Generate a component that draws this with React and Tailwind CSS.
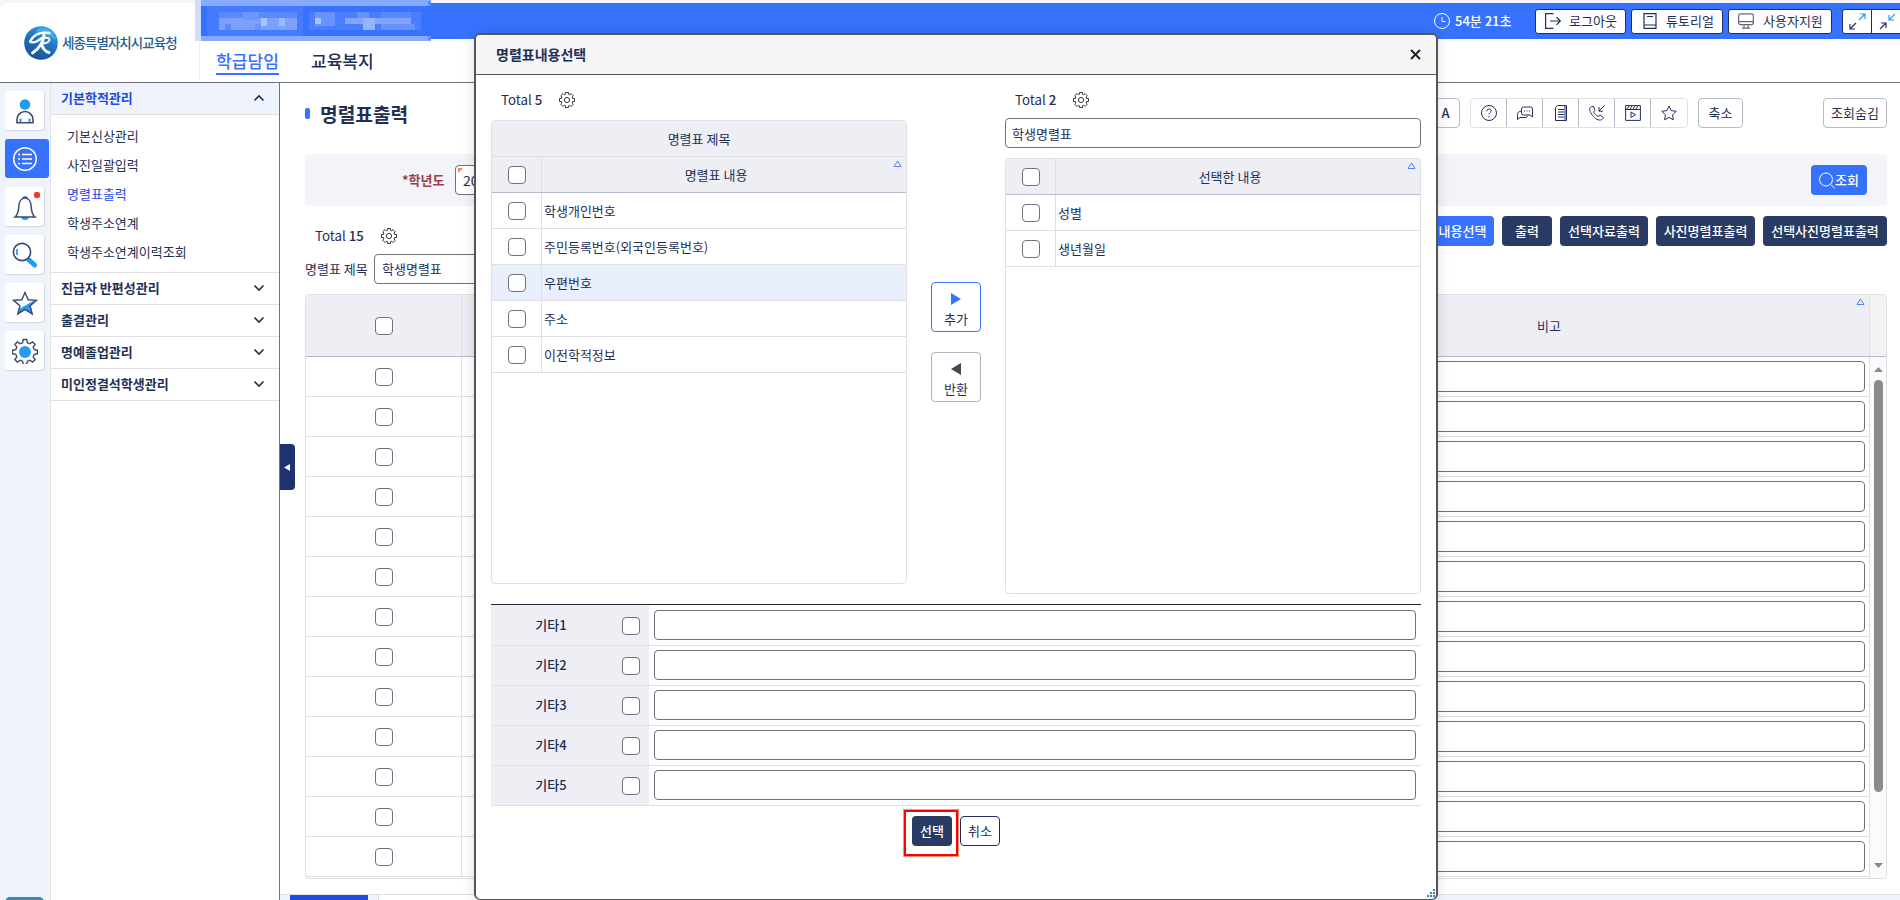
import React, { useState } from "react";
import clsx from "clsx";

const subMenus = [
  "기본신상관리",
  "사진일괄입력",
  "명렬표출력",
  "학생주소연계",
  "학생주소연계이력조회",
];

const menus = [
  "진급자 반편성관리",
  "출결관리",
  "명예졸업관리",
  "미인정결석학생관리",
];

const leftRows = [
  "학생개인번호",
  "주민등록번호(외국인등록번호)",
  "우편번호",
  "주소",
  "이전학적정보",
];

const rightRows = ["성별", "생년월일"];

const etcRows = ["기타1", "기타2", "기타3", "기타4", "기타5"];

function Checkbox() {
  return (
    <span className="block w-[18px] h-[18px] shrink-0 rounded-[4px] border border-[#6f7080] bg-white" />
  );
}

function Gear() {
  return (
    <svg width="16" height="16" viewBox="0 0 16 16" fill="none" stroke="#333" strokeWidth="1">
      <path d="M6.500 .5h3v1.700l1.300.5 1.200-1.200 2.300 2.300-1.200 1.200.5 1.500h1.900v3h-1.900l-.5 1.500 1.200 1.200-2.300 2.300-1.200-1.200-1.300.5v1.700h-3v-1.700l-1.300-.5L4 14.500l-2.300-2.300 1.200-1.200-.5-1.500H.5v-3h1.900l.5-1.500-1.200-1.200L4 1.500l1.200 1.200 1.300-.5z" />
      <circle cx="8" cy="8" r="2.600" />
    </svg>
  );
}

function Chevron({ up }) {
  return (
    <svg width="12" height="8" viewBox="0 0 12 8" fill="none" stroke="#1f3050" strokeWidth="1.6">
      <path d={up ? "M1.500 6.500 6 2l4.500 4.500" : "M1.500 1.500 6 6l4.500-4.500"} />
    </svg>
  );
}

function SortMark() {
  return (
    <svg
      className="absolute right-[4px] top-[3px]"
      width="9"
      height="8"
      viewBox="0 0 9 8"
      fill="none"
      stroke="#5585ff"
      strokeWidth="1"
    >
      <path d="M4.500 1 8 6.500H1z" />
    </svg>
  );
}

function Total({ count }) {
  return (
    <span className="whitespace-pre text-[13.3px] leading-[20px]">
      Total <b className="font-medium">{count}</b>
    </span>
  );
}

function Logo() {
  return (
    <svg width="34" height="34" viewBox="0 0 34 34">
      <defs>
        <linearGradient id="logo" x1="0.8" y1="0" x2="0.3" y2="1">
          <stop offset="0" stopColor="#35a8ea" />
          <stop offset="0.5" stopColor="#1f72bd" />
          <stop offset="1" stopColor="#174f9c" />
        </linearGradient>
      </defs>
      <circle cx="17" cy="17" r="16.800" fill="url(#logo)" />
      <path d="M13 3a14 14 0 0 1 19 11l-5-3-14-4z" fill="#62bff2" opacity=".5" />
      <g fill="none" stroke="#fff" strokeLinecap="round" strokeLinejoin="round">
        <path d="M25.500 7C18 6 10 8 6 15.500c3 2.500 8-.5 12-3.500" strokeWidth="2.300" />
        <path d="M20 7c.5 7-4 15-11.500 20" strokeWidth="2.800" />
        <path d="M16 13c5-2 10-1.500 9.500 1-.5 2-4 3.500-7.500 3.500" strokeWidth="2" />
        <path d="M17.500 18c1 4 4 7.500 7.500 8.500" strokeWidth="3" />
      </g>
    </svg>
  );
}

// 개인정보 영역 모자이크
function Mosaic() {
  return (
    <svg className="absolute left-[195px] top-0" width="237" height="42" shapeRendering="crispEdges">
      <rect x="4" y="6" width="233" height="33" fill="#3772ff" />
      <rect x="0" y="0" width="6" height="41" fill="#d3ddfb" />
      <rect x="6" y="0" width="230" height="6" fill="#87a9ff" />
      <rect x="6" y="36" width="230" height="5" fill="#87a9ff" />
      <rect x="233" y="1" width="3" height="5" fill="#5c8bff" />
      <rect x="233" y="36" width="3" height="4" fill="#5c8bff" />
      <rect x="12" y="6" width="96" height="30" fill="#457bff" />
      <rect x="24" y="12" width="78" height="18" fill="#5a89ff" />
      <rect x="24" y="18" width="78" height="12" fill="#7ba0ff" />
      <rect x="30" y="24" width="6" height="6" fill="#5a89ff" />
      <rect x="48" y="12" width="16" height="8" fill="#6c97ff" />
      <rect x="66" y="18" width="6" height="8" fill="#a5c5ff" />
      <rect x="84" y="18" width="6" height="8" fill="#9dbcff" />
      <rect x="60" y="24" width="6" height="6" fill="#6892ff" />
      <rect x="114" y="12" width="112" height="18" fill="#4a7eff" />
      <rect x="120" y="12" width="20" height="14" fill="#6892ff" />
      <rect x="120" y="18" width="6" height="6" fill="#a5c5ff" />
      <rect x="150" y="18" width="66" height="6" fill="#82a6ff" />
      <rect x="162" y="12" width="12" height="6" fill="#6892ff" />
      <rect x="168" y="18" width="12" height="12" fill="#96b5ff" />
      <rect x="186" y="12" width="30" height="6" fill="#5a89ff" />
      <rect x="186" y="24" width="34" height="6" fill="#6892ff" />
    </svg>
  );
}

function Header() {
  return (
    <header className="flex h-[83px] border-b border-[#6f7078] bg-[#f5f5f5] pt-[3px]">
      <div className="flex w-[200px] shrink-0 items-center gap-1 rounded-tl-lg border-r border-[#eef0f4] bg-white pl-6">
        <Logo />
        <span className="mb-[2px] whitespace-nowrap text-[13.5px] font-medium leading-[20px] tracking-[-0.95px] text-[#255c92]">
          세종특별자치시교육청
        </span>
      </div>
      <div className="flex flex-1 flex-col bg-white">
        <div className="flex h-[36px] items-center gap-[5px] bg-[#3772ff] text-[13px]">
          <div className="ml-[1234px] flex w-[96px] shrink-0 items-center gap-[5px] font-medium text-white">
            <svg width="16" height="16" viewBox="0 0 16 16" fill="none" stroke="#fff">
              <circle cx="8" cy="8" r="7.500" />
              <path d="M8 4v4.500h3.500" />
            </svg>
            <span>54분 21초</span>
          </div>
          <button className="flex h-[25px] w-[91px] shrink-0 items-center gap-[8px] rounded-[3px] border border-[#1f3060] bg-white pl-[9px]">
            <svg width="16" height="16" viewBox="0 0 16 16" fill="none" stroke="#1f3060" strokeWidth="1.200">
              <path d="M8.500 .6H.6v14.800h7.900M5 8h10M11.500 4.200 15.300 8l-3.800 3.800" />
            </svg>
            로그아웃
          </button>
          <button className="flex h-[25px] w-[92px] shrink-0 items-center gap-[9px] rounded-[3px] border border-[#1f3060] bg-white pl-[11px]">
            <svg width="14" height="16" viewBox="0 0 14 16" fill="none" stroke="#1f3060" strokeWidth="1.200">
              <path d="M1 .6h12v14.800H1zM1 12h12M4 3.500h6" />
            </svg>
            튜토리얼
          </button>
          <button className="flex h-[25px] w-[104px] shrink-0 items-center gap-[9px] rounded-[3px] border border-[#1f3060] bg-white pl-[9px]">
            <svg width="16" height="16" viewBox="0 0 16 16" fill="none" stroke="#66677a" strokeWidth="1.200">
              <rect x=".6" y=".8" width="14.800" height="10.800" rx="2" />
              <path d="M.6 8.600h14.800M6 11.600V15M10 11.600V15M4 15.200h8" />
            </svg>
            사용자지원
          </button>
          <div className="ml-[5px] flex h-[25px] w-[62px] shrink-0 items-center rounded-[3px] border border-[#1f3060] bg-white">
            <span className="flex h-full w-[29px] items-center justify-center border-r border-[#1f3060]">
              <svg width="17" height="17" viewBox="0 0 17 17" fill="none" strokeWidth="1.200">
                <path d="M10 7l6-6M11 1h5v5" stroke="#269cf0" />
                <path d="M7 10l-6 6M1 11v5h5" stroke="#1f3060" />
              </svg>
            </span>
            <span className="flex h-full w-[30px] items-center justify-center">
              <svg width="17" height="17" viewBox="0 0 17 17" fill="none" strokeWidth="1.200">
                <path d="M16 1l-6 6M10 2v5h5" stroke="#269cf0" />
                <path d="M1 16l6-6M2 10h5v5" stroke="#1f3060" />
              </svg>
            </span>
          </div>
        </div>
        <nav className="flex gap-8 pl-4 pt-[10px] text-[17.1px] font-medium leading-[24px]">
          <span className="border-b-2 border-[#3772ff] text-[#3772ff]">학급담임</span>
          <span>교육복지</span>
        </nav>
      </div>
    </header>
  );
}

const railIcons = [
  <svg key="user" width="26" height="26" viewBox="0 0 26 26" fill="none">
    <circle cx="13" cy="6.500" r="5.300" fill="#229cf0" />
    <path d="M5 24.700v-3.200a8 8 0 0 1 16 0v3.200z" stroke="#3c4a70" strokeWidth="1.600" />
    <path d="M8.500 20.500v3.400M17.500 20.500v3.400" stroke="#229cf0" strokeWidth="2" />
  </svg>,
  <svg key="list" width="26" height="26" viewBox="0 0 26 26" fill="none" stroke="#fff" strokeWidth="1.500">
    <circle cx="13" cy="13" r="11.300" />
    <path d="M10 8.500h10M10 13h10M10 17.500h10M6 8.500h2M6 13h2M6 17.500h2" />
  </svg>,
  <svg key="bell" width="26" height="26" viewBox="0 0 26 26" fill="none">
    <path d="M10 5a3 3 0 0 1 6 0M9 23h8c0 4-8 4-8 0" fill="#229cf0" />
    <path d="M3 23c4-3 3.500-9 4-12 .5-4 3-7 6-7s5.500 3 6 7c.5 3 0 9 4 12z" fill="#fff" stroke="#3c4a70" strokeWidth="1.500" />
  </svg>,
  <svg key="search" width="26" height="26" viewBox="0 0 26 26" fill="none">
    <path d="m17 18 5.500 5" stroke="#229cf0" strokeWidth="5" strokeLinecap="round" />
    <circle cx="10" cy="10" r="8.600" fill="#fff" stroke="#3c4a70" strokeWidth="1.600" />
    <path d="M5.500 13a6 6 0 0 1 0-6" stroke="#229cf0" strokeWidth="1.600" />
  </svg>,
  <svg key="star" width="26" height="26" viewBox="0 0 26 26" fill="none">
    <path d="M23 10 7 19l-1.500 5 7.500-4 7.500 4-2-8z" fill="#229cf0" />
    <path d="m13 2.500 3.200 7.300 8.200.6-6.300 5.300 2.100 8.200-7.200-4.500-7.200 4.500 2.100-8.200L1.600 10.400l8.200-.6z" stroke="#3c4a70" strokeWidth="1.400" />
  </svg>,
  <svg key="gear" width="26" height="26" viewBox="0 0 26 26" fill="none" stroke="#3c4a70" strokeWidth="1.400">
    <path d="M11.200 1.500h3.600l.6 3.300 2.400 1 2.800-1.900 2.500 2.500-1.900 2.800 1 2.400 3.300.6v3.600l-3.300.6-1 2.400 1.900 2.800-2.500 2.500-2.800-1.900-2.400 1-.6 3.300h-3.600l-.6-3.300-2.400-1-2.800 1.900-2.500-2.500 1.900-2.800-1-2.400-3.300-.6v-3.600l3.300-.6 1-2.400-1.900-2.800 2.500-2.500 2.800 1.900 2.400-1z" />
    <circle cx="13" cy="14" r="6" fill="#229cf0" stroke="none" />
  </svg>,
];

function Rail() {
  return (
    <div className="flex w-[51px] shrink-0 flex-col gap-[9px] border-r border-[#e2e2e6] bg-[#eef3fc] pl-[5px] pt-[8px]">
      {railIcons.map((icon, index) => (
        <div
          key={index}
          className={clsx(
            "relative flex h-[39px] shrink-0 items-center rounded-[3px] pl-[7px]",
            index === 1
              ? "w-[44px] bg-[#3772ff]"
              : "w-[39px] bg-white shadow-[1px_1px_1px_#d4d6dc]"
          )}
        >
          {icon}
          {index === 2 && (
            <span className="absolute left-[29px] top-[5px] h-[6px] w-[6px] rounded-[2px] bg-[#f5352b]" />
          )}
        </div>
      ))}
      <div className="mt-[518px] h-[10px] w-[39px] shrink-0 rounded-t-[5px] bg-[#3589b8]" />
    </div>
  );
}

function Sidebar() {
  return (
    <aside className="w-[229px] shrink-0 border-r border-[#6f7078] bg-white text-[13px]">
      <div className="flex h-[32px] items-center justify-between border-b border-[#e0e0e3] bg-[#eef3fc] pb-px pl-[10px] pr-[14px] font-bold text-[#1f4be0]">
        <span>기본학적관리</span>
        <Chevron up />
      </div>
      <ul className="h-[158px] border-b border-[#e0e0e3] pl-[16px] pt-[6px]">
        {subMenus.map((menu) => (
          <li
            key={menu}
            className={clsx("h-[29px] leading-[29px]", menu === "명렬표출력" && "text-[#1f4be0]")}
          >
            {menu}
          </li>
        ))}
      </ul>
      {menus.map((menu) => (
        <div
          key={menu}
          className="flex h-[32px] items-center justify-between border-b border-[#e0e0e3] pb-px pl-[10px] pr-[14px] font-bold"
        >
          <span>{menu}</span>
          <Chevron />
        </div>
      ))}
    </aside>
  );
}

const toolIcons = [
  <>
    <circle cx="8" cy="8" r="7.500" />
    <path d="M5.800 6.200c0-3 4.400-2.800 4.400-.2 0 1.600-2.200 1.600-2.200 3.500M8 11v1.300" />
  </>,
  <>
    <path d="M6.500 2h7a2 2 0 0 1 2 2v8l-2.500-2H6.500a2 2 0 0 1-2-2V4a2 2 0 0 1 2-2zM4.500 6c-2.500 0-4 1.500-4 3.500v5l2.500-2h5c1.500 0 2.500-1 3-2" />
    <path d="M7 6h1M9.500 6h1M12 6h1" />
  </>,
  <path d="M4.500.5h9v15h-11v-13zM5 4.500h6M5 7h6M5 9.500h6M5 12h6M12 .5v15" />,
  <>
    <path d="M2.500 1.500C0 3 0 5 2.500 9s6 6.500 9 6c1.500-.3 2.500-1.500 3-2.500L11 10l-2 1.500C7 10.500 5.500 9 4.500 7L6 5.500 4.500 1.500z" />
    <path d="M15.500.5 10 6M10 2v4.200h4" />
  </>,
  <>
    <path d="M.6.600h14.800v14.800H.6zM.6 4.500h14.800M6 7v5.500L10.500 9.800z" />
    <path d="m2 4 2-3M5 4l2-3M8 4l2-3M11 4l2-3" />
  </>,
  <path d="m8 1 2.200 4.600 5 .7-3.700 3.500.9 5L8 12.400l-4.400 2.400.9-5L.8 6.300l5-.7z" />,
];

function TitleBar() {
  return (
    <div className="flex h-[30px] items-center">
      <span className="h-[11px] w-[5px] rounded-[2px] bg-[#3772ff]" />
      <h1 className="ml-[10px] pt-[2px] text-[19.2px] font-bold leading-[28px]">명렬표출력</h1>
      <div className="ml-auto flex text-[13px]">
        <button className="h-[30px] w-[37px] rounded-[4px] border border-[#b9bac8] pr-[2px] font-medium">
          <span className="ml-[10px]">A</span>
        </button>
        <div className="ml-[10px] flex h-[30px] rounded-[4px] border border-[#dfe0e6]">
          {toolIcons.map((icon, index) => (
            <span
              key={index}
              className="flex w-[36px] items-center justify-center border-r border-[#b9bac8] last:border-r-0"
            >
              <svg width="16" height="16" viewBox="0 0 16 16" fill="none" stroke="#1f3060">
                {icon}
              </svg>
            </span>
          ))}
        </div>
        <button className="ml-[10px] h-[30px] w-[45px] rounded-[4px] border border-[#b9bac8]">
          축소
        </button>
        <button className="ml-[80px] h-[30px] w-[64px] rounded-[4px] border border-[#b9bac8]">
          조회숨김
        </button>
      </div>
    </div>
  );
}

function MainGrid() {
  return (
    <div className="mt-[10px] flex h-[585px] w-[1582px] flex-col overflow-hidden rounded-[4px] border border-[#e0e0e3]">
      <div className="flex h-[62px] shrink-0 border-b border-[#b4b9cc] bg-[#eeeff5]">
        <div className="flex w-[156px] items-center justify-center border-r border-[#e0e0e3] pt-px">
          <Checkbox />
        </div>
        <div className="w-[783px] border-r border-[#e0e0e3]" />
        <div className="relative flex flex-1 items-center justify-center border-r border-[#e0e0e3] pr-[16px] text-[13px]">
          비고
          <SortMark />
        </div>
        <div className="w-[16px] bg-[#f3f3f3]" />
      </div>
      <div className="flex min-h-0 flex-1">
        <div className="flex-1 overflow-hidden">
          {Array.from({ length: 14 }, (_, index) => (
            <div key={index} className="flex h-[40px] border-b border-[#e0e0e3]">
              <div className="flex w-[156px] items-center justify-center border-r border-[#e0e0e3]">
                <Checkbox />
              </div>
              <div className="w-[783px] border-r border-[#e0e0e3]" />
              <div className="flex-1 border-r border-[#e0e0e3] p-[4px]">
                <div className="h-[31px] rounded-[4px] border border-[#6f7078] bg-white" />
              </div>
            </div>
          ))}
        </div>
        <div className="flex w-[16px] flex-col items-center bg-[#fbfbfb] pb-[10px] pt-[10px]">
          <svg width="9" height="5" viewBox="0 0 9 5" fill="#8b8b8b">
            <path d="M0 5 4.500 0 9 5z" />
          </svg>
          <div className="mt-[8px] h-[412px] w-[9px] rounded-full bg-[#8b8b8b]" />
          <svg className="mt-auto" width="9" height="5" viewBox="0 0 9 5" fill="#8b8b8b">
            <path d="M0 0 4.500 5 9 0z" />
          </svg>
        </div>
      </div>
    </div>
  );
}

function Main() {
  return (
    <main className="relative flex-1 bg-white">
      <div className="pl-[25px] pr-[13px] pt-[15px]">
        <TitleBar />
        <section className="mt-[26px] flex h-[52px] items-center rounded-[4px] bg-[#f3f4f9] pl-[97px] pr-[20px] text-[13px]">
          <span className="w-[43px] whitespace-nowrap font-bold text-[#9c3f50]">*학년도</span>
          <div className="relative ml-[10px] flex h-[30px] w-[90px] items-center rounded-[4px] border border-[#6f7078] bg-white pl-[7px] text-[14px]">
            <svg className="absolute left-[2px] top-[2px]" width="5" height="5" fill="#f28070">
              <path d="M0 0h5L0 5z" />
            </svg>
            2024
          </div>
          <button className="ml-auto flex h-[30px] w-[56px] items-center rounded-[4px] bg-[#3772ff] pl-[8px] font-medium text-white">
            <svg width="16" height="17" viewBox="0 0 16 17" fill="none" stroke="#fff">
              <circle cx="7" cy="7.500" r="6.500" />
              <path d="m11.800 12.500 4 4" />
            </svg>
            조회
          </button>
        </section>
        <div className="mt-[10px] flex h-[30px] items-start">
          <div className="ml-[10px] mt-[10px] flex h-[20px] items-center gap-[17px]">
            <Total count={15} />
            <Gear />
          </div>
          <div className="ml-auto flex h-[30px] gap-[8px] text-[13px] font-medium text-white">
            <button className="w-[99px] rounded-[4px] bg-[#3772ff]">명렬표내용선택</button>
            <button className="w-[50px] rounded-[4px] bg-[#2a3b63]">출력</button>
            <button className="w-[88px] rounded-[4px] bg-[#2a3b63]">선택자료출력</button>
            <button className="w-[99px] rounded-[4px] bg-[#2a3b63]">사진명렬표출력</button>
            <button className="w-[124px] rounded-[4px] bg-[#2a3b63]">선택사진명렬표출력</button>
          </div>
        </div>
        <div className="mt-[8px] flex h-[30px] items-center text-[13px]">
          <span className="w-[69px]">명렬표 제목</span>
          <div className="flex h-[30px] w-[300px] items-center rounded-[4px] border border-[#6f7078] pl-[7px]">
            학생명렬표
          </div>
        </div>
        <MainGrid />
      </div>
      {/* 사이드 메뉴 접기 */}
      <div className="absolute left-0 top-[361px] flex h-[46px] w-[15px] items-center rounded-r-[4px] bg-[#203172] pl-[4px]">
        <svg width="6" height="7" fill="#fff">
          <path d="M6 0v7L0 3.500z" />
        </svg>
      </div>
      <div className="mt-[15px] flex h-[10px] border-t border-[#e0e0e3] bg-[#eef3fc] pl-[10px]">
        <div className="w-[78px] bg-[#1f4be0]" />
        <div className="ml-[10px] w-[300px] border-l border-[#d8d9e0] bg-white" />
      </div>
    </main>
  );
}

function Modal() {
  const [title, setTitle] = useState("학생명렬표");

  return (
    <div className="absolute left-[474px] top-[33px] flex h-[867px] w-[964px] flex-col rounded-[6px] border-2 border-b border-[#555] bg-white text-[13px] shadow-[0_0_14px_rgba(0,0,0,0.14)]">
      <div className="flex h-[40px] shrink-0 items-center justify-between rounded-t-[4px] border-b border-[#555] bg-[#f5f5f5] pl-[20px] pr-[15px]">
        <h2 className="text-[14px] font-bold">명렬표내용선택</h2>
        <svg width="11" height="11" viewBox="0 0 11 11" fill="none" stroke="#222" strokeWidth="2">
          <path d="m1 1 9 9M10 1l-9 9" />
        </svg>
      </div>

      <div className="flex h-[529px] shrink-0 px-[15px]">
        <div className="w-[416px] pt-[15px]">
          <div className="ml-[10px] flex h-[20px] items-center gap-[17px]">
            <Total count={5} />
            <Gear />
          </div>
          <div className="mt-[10px] h-[464px] rounded-[4px] border border-[#e0e0e3]">
            <div className="flex h-[36px] items-center justify-center rounded-t-[3px] border-b border-[#e0e0e3] bg-[#eeeff5]">
              명렬표 제목
            </div>
            <div className="flex h-[36px] border-b border-[#b4b9cc] bg-[#eeeff5]">
              <div className="flex w-[50px] items-center justify-center border-r border-[#e0e0e3]">
                <Checkbox />
              </div>
              <div className="relative flex flex-1 items-center justify-center pr-[16px]">
                명렬표 내용
                <SortMark />
              </div>
            </div>
            {leftRows.map((row) => (
              <div
                key={row}
                className={clsx(
                  "flex h-[36px] border-b border-[#e0e0e3]",
                  row === "우편번호" && "bg-[#e9effc]"
                )}
              >
                <div className="flex w-[50px] items-center justify-center border-r border-[#e0e0e3]">
                  <Checkbox />
                </div>
                <div className="flex items-center pl-[2px]">{row}</div>
              </div>
            ))}
          </div>
        </div>

        <div className="flex w-[98px] flex-col items-center gap-[20px] pt-[207px]">
          <button className="flex h-[50px] w-[50px] flex-col items-center rounded-[4px] border border-[#3772ff] pt-[10px] leading-[18px]">
            <svg className="mb-[5px] shrink-0" width="10" height="12" fill="#3772ff">
              <path d="M0 0v12l10-6z" />
            </svg>
            추가
          </button>
          <button className="flex h-[50px] w-[50px] flex-col items-center rounded-[4px] border border-[#b4b5c4] pt-[10px] leading-[18px]">
            <svg className="mb-[5px] shrink-0" width="10" height="12" fill="#444650">
              <path d="M10 0v12L0 6z" />
            </svg>
            반환
          </button>
        </div>

        <div className="w-[416px] pt-[15px]">
          <div className="ml-[10px] flex h-[20px] items-center gap-[17px]">
            <Total count={2} />
            <Gear />
          </div>
          <input
            className="mt-[8px] block h-[30px] w-full rounded-[4px] border border-[#6f7078] px-[6px]"
            value={title}
            onChange={(e) => setTitle(e.target.value)}
          />
          <div className="mt-[10px] h-[436px] rounded-[4px] border border-[#e0e0e3]">
            <div className="flex h-[36px] rounded-t-[3px] border-b border-[#b4b9cc] bg-[#eeeff5]">
              <div className="flex w-[50px] items-center justify-center border-r border-[#e0e0e3]">
                <Checkbox />
              </div>
              <div className="relative flex flex-1 items-center justify-center pr-[16px]">
                선택한 내용
                <SortMark />
              </div>
            </div>
            {rightRows.map((row) => (
              <div key={row} className="flex h-[36px] border-b border-[#e0e0e3]">
                <div className="flex w-[50px] items-center justify-center border-r border-[#e0e0e3]">
                  <Checkbox />
                </div>
                <div className="flex items-center pl-[2px]">{row}</div>
              </div>
            ))}
          </div>
        </div>
      </div>

      <div className="mx-[15px] border-t border-[#222630]">
        {etcRows.map((row, index) => (
          <div
            key={row}
            className={clsx("flex border-b border-[#e0e0e3]", index === 0 ? "h-[41px]" : "h-[40px]")}
          >
            <div className="flex w-[158px] items-end bg-[#eeeff5] pr-[9px] font-medium">
              <span className="w-[120px] pb-px text-center leading-[38px]">{row}</span>
              <span className="mb-[10px] ml-auto">
                <Checkbox />
              </span>
            </div>
            <div className="flex flex-1 items-end px-[5px] pb-[5px]">
              <div className="h-[30px] flex-1 rounded-[4px] border border-[#6f7078]" />
            </div>
          </div>
        ))}
      </div>

      <div className="mt-[4px] flex pl-[428px]">
        <div className="flex h-[46px] w-[54px] border-2 border-[#ff0000] pl-[6px] pt-[4px] shadow-[0_0_0_1px_rgba(255,70,40,0.6)]">
          <button className="h-[30px] w-[40px] shrink-0 rounded-[4px] bg-[#2a3b63] font-medium text-white">
            선택
          </button>
        </div>
        <button className="ml-[2px] mt-[6px] h-[30px] w-[40px] rounded-[4px] border border-[#1f3060]">
          취소
        </button>
      </div>

      <svg className="absolute bottom-[1px] right-0" width="9" height="9" viewBox="0 0 9 9" fill="#2f8ab8">
        <path d="M6 0h2v2H6zM3 3h2v2H3zM6 3h2v2H6zM0 6h2v2H0zM3 6h2v2H3zM6 6h2v2H6z" />
      </svg>
    </div>
  );
}

export default function App() {
  return (
    <div className="relative flex h-[900px] w-[1900px] flex-col overflow-hidden bg-white font-['Noto_Sans_CJK_KR',sans-serif] text-[#1f3055]">
      <Header />
      <Mosaic />
      <div className="flex min-h-0 flex-1">
        <Rail />
        <Sidebar />
        <Main />
      </div>
      <Modal />
    </div>
  );
}
